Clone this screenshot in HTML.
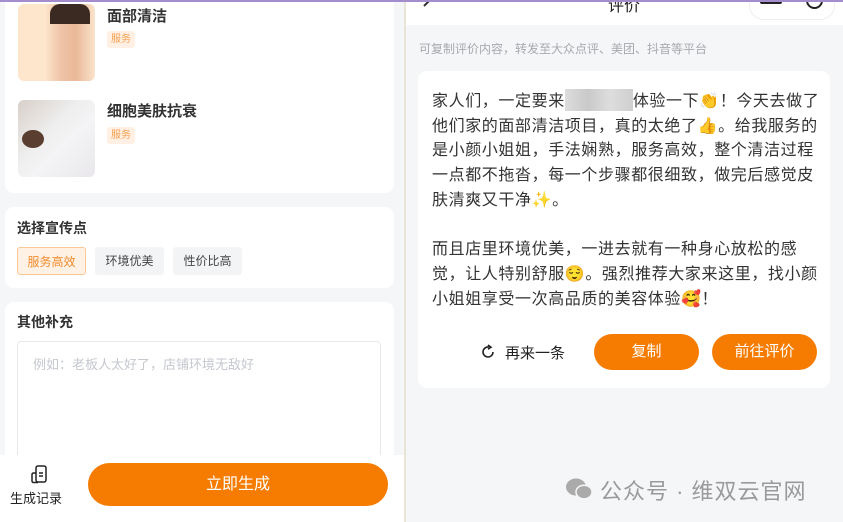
<!DOCTYPE html>
<html><head><meta charset="utf-8"><style>
*{margin:0;padding:0;box-sizing:border-box}
html,body{width:843px;height:522px;overflow:hidden}
body{position:relative;background:#f5f6f8;font-family:"Liberation Sans","Noto Sans CJK SC",sans-serif;color:#333}
.abs{position:absolute}
.card{position:absolute;background:#fff;border-radius:9px}
.tag{position:absolute;background:#fff0e3;color:#f5a050;font-size:10px;border-radius:3px;padding:2px 4px;line-height:13px}
.chip{position:absolute;top:247px;height:28px;width:69px;border-radius:3px;background:#f3f4f6;font-size:12px;line-height:28px;text-align:center;color:#444}
.btn{position:absolute;background:#f57c00;color:#fff;border-radius:20px;text-align:center}
</style></head><body>
<div class="abs" style="left:0;top:0;width:843px;height:2px;background:#a58ccc;z-index:5"></div>
<div class="abs" style="left:0;top:0;width:404px;height:522px;background:#f5f6f8"></div>
<div class="card" style="left:5px;top:-10px;width:389px;height:203px"></div>
<div class="abs" style="left:18px;top:4px;width:77px;height:77px;border-radius:6px;background:linear-gradient(90deg,#fde6cc 0%,#fde6cc 35%,#f0c4a8 55%,#e9b898 75%,#fbe4cc 100%)"></div>
<div class="abs" style="left:50px;top:4px;width:40px;height:20px;border-radius:10px 10px 0 0;background:#3a2a22"></div>
<div class="abs" style="left:107px;top:5px;font-size:15px;font-weight:bold;color:#333">面部清洁</div>
<div class="tag" style="left:107px;top:31px">服务</div>
<div class="abs" style="left:18px;top:100px;width:77px;height:77px;border-radius:6px;background:linear-gradient(135deg,#d8cfc8 0%,#eee 40%,#f4f4f6 60%,#e8e6ea 100%)"></div>
<div class="abs" style="left:22px;top:130px;width:22px;height:18px;border-radius:50%;background:#5a3e30"></div>
<div class="abs" style="left:107px;top:100px;font-size:15px;font-weight:bold;color:#333">细胞美肤抗衰</div>
<div class="tag" style="left:107px;top:127px">服务</div>

<div class="card" style="left:5px;top:207px;width:389px;height:81px"></div>
<div class="abs" style="left:17px;top:218px;font-size:14px;font-weight:bold;color:#333">选择宣传点</div>
<div class="chip" style="left:17px;background:#fff1e4;border:1px solid #f9c896;color:#f08a2c">服务高效</div>
<div class="chip" style="left:95px">环境优美</div>
<div class="chip" style="left:173px">性价比高</div>

<div class="card" style="left:5px;top:302px;width:389px;height:230px"></div>
<div class="abs" style="left:17px;top:312px;font-size:14px;font-weight:bold;color:#333">其他补充</div>
<div class="abs" style="left:17px;top:341px;width:364px;height:130px;border:1px solid #e6e8ec;border-radius:4px"></div>
<div class="abs" style="left:33px;top:354px;font-size:13px;color:#c4c8cf">例如：老板人太好了，店铺环境无敌好</div>
<div class="abs" style="left:0;top:455px;width:404px;height:67px;background:#fff"></div>
<svg class="abs" style="left:30px;top:465px" width="22" height="20" viewBox="0 0 22 20"><rect x="6" y="1" width="10" height="16" rx="2" fill="none" stroke="#222" stroke-width="1.5"/><path d="M6 8H3.5a1.5 1.5 0 0 0-1.5 1.5V16a1.5 1.5 0 0 0 1.5 1.5H8" fill="none" stroke="#222" stroke-width="1.5"/><path d="M9 8h4M9 11h4" stroke="#222" stroke-width="1.4"/></svg>
<div class="abs" style="left:10px;top:488px;font-size:13px;color:#222">生成记录</div>
<div class="btn" style="left:88px;top:463px;width:300px;height:43px;line-height:43px;font-size:16px;border-radius:22px">立即生成</div>
<div class="abs" style="left:404px;top:0;width:2px;height:522px;background:#e8e4d6"></div>

<div class="abs" style="left:406px;top:0;width:437px;height:25px;background:#fff"></div>
<svg class="abs" style="left:420px;top:0" width="14" height="12"><path d="M10 0L4 6" stroke="#333" stroke-width="2" fill="none"/></svg>
<div class="abs" style="left:608px;top:-8px;font-size:16px;color:#222">评价</div>
<div class="abs" style="left:749px;top:-10px;width:86px;height:30px;border:1px solid #eee;border-radius:15px"></div>
<div class="abs" style="left:760px;top:0;width:22px;height:4px;background:#222;border-radius:2px"></div>
<div class="abs" style="left:806px;top:-8px;width:17px;height:17px;border:2px solid #222;border-radius:50%"></div>
<div class="abs" style="left:419px;top:40px;font-size:12px;color:#a6a9ae">可复制评价内容，转发至大众点评、美团、抖音等平台</div>
<div class="card" style="left:418px;top:71px;width:412px;height:317px"></div>
<div class="abs" style="left:432px;top:89px;width:394px;font-size:16px;letter-spacing:0.6px;line-height:24.7px;color:#333">家人们，一定要来<span style="display:inline-block;width:68px;height:22px;vertical-align:-5px;background:linear-gradient(90deg,#ddd,#c9c9c9,#ddd,#cfcfcf)"></span>体验一下👏！今天去做了他们家的面部清洁项目，真的太绝了👍。给我服务的是小颜小姐姐，手法娴熟，服务高效，整个清洁过程一点都不拖沓，每一个步骤都很细致，做完后感觉皮肤清爽又干净✨。<br><br>而且店里环境优美，一进去就有一种身心放松的感觉，让人特别舒服😌。强烈推荐大家来这里，找小颜小姐姐享受一次高品质的美容体验🥰！</div>
<svg class="abs" style="left:480px;top:344px" width="16" height="16" viewBox="0 0 16 16"><path d="M13 8A5 5 0 1 1 9 3.1" fill="none" stroke="#222" stroke-width="1.6"/><path d="M8 1l3 2.2-3 2" fill="none" stroke="#222" stroke-width="1.6"/></svg>
<div class="abs" style="left:505px;top:342px;font-size:15px;color:#222">再来一条</div>
<div class="btn" style="left:594px;top:334px;width:105px;height:36px;line-height:36px;font-size:15px">复制</div>
<div class="btn" style="left:712px;top:334px;width:105px;height:36px;line-height:36px;font-size:15px">前往评价</div>
<svg class="abs" style="left:565px;top:477px" width="28" height="24" viewBox="0 0 28 24"><ellipse cx="11" cy="10" rx="10" ry="8.5" fill="#aaa"/><ellipse cx="19" cy="15" rx="8" ry="6.8" fill="#aaa" stroke="#f5f6f8" stroke-width="1.5"/></svg>
<div class="abs" style="left:600px;top:474px;font-size:22px;color:#9a9a9a;letter-spacing:1px">公众号 · 维双云官网</div>
</body></html>
